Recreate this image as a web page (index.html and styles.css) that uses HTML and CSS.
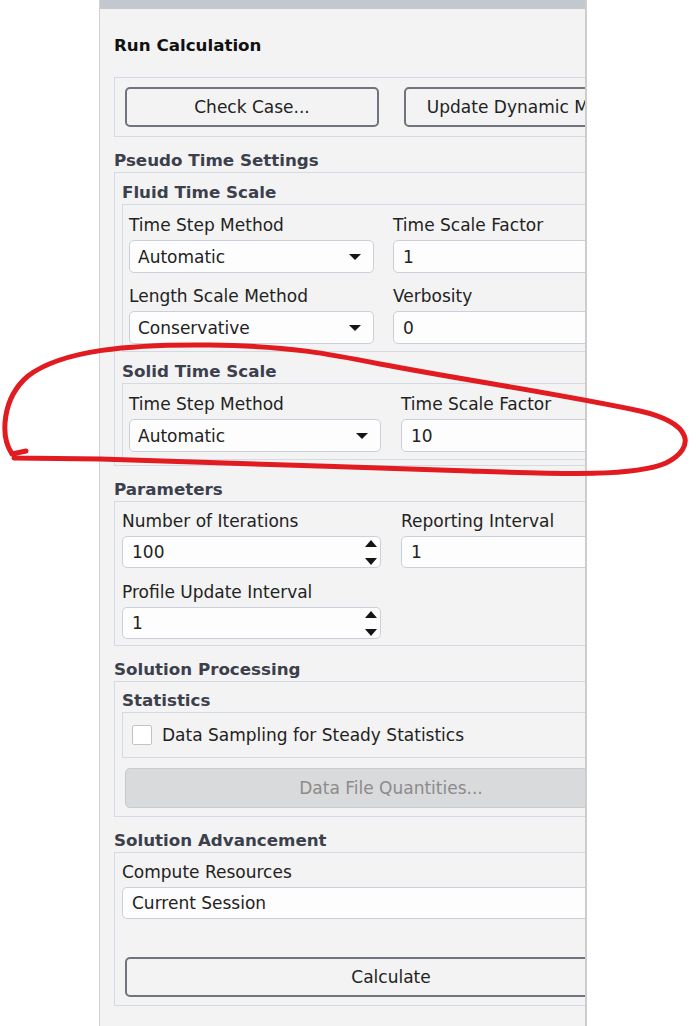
FILE: index.html
```html
<!DOCTYPE html>
<html>
<head>
<meta charset="utf-8">
<title>Run Calculation</title>
<link rel="stylesheet" href="styles.css">
</head>
<body>
<div class="panel">
  <div class="topbar"></div>
  <div class="content">
    <div class="title">Run Calculation</div>
    <div class="box box-buttons">
      <button class="btn">Check Case...</button>
      <button class="btn">Update Dynamic Mesh...</button>
    </div>

    <div class="sec">Pseudo Time Settings</div>
    <div class="box group">
      <div class="sub">Fluid Time Scale</div>
      <div class="box inner grid grid-fluid">
        <div class="field">
          <div class="label">Time Step Method</div>
          <div class="select"><span>Automatic</span><span class="caret"></span></div>
        </div>
        <div class="field">
          <div class="label">Time Scale Factor</div>
          <div class="input">1</div>
        </div>
        <div class="field">
          <div class="label">Length Scale Method</div>
          <div class="select"><span>Conservative</span><span class="caret"></span></div>
        </div>
        <div class="field">
          <div class="label">Verbosity</div>
          <div class="input">0</div>
        </div>
      </div>
      <div class="sub sub-gap">Solid Time Scale</div>
      <div class="box inner grid grid-solid">
        <div class="field">
          <div class="label">Time Step Method</div>
          <div class="select"><span>Automatic</span><span class="caret"></span></div>
        </div>
        <div class="field">
          <div class="label">Time Scale Factor</div>
          <div class="input">10</div>
        </div>
      </div>
    </div>

    <div class="sec">Parameters</div>
    <div class="box group-params grid grid-params">
      <div class="field">
        <div class="label">Number of Iterations</div>
        <div class="spin"><span>100</span><span class="arrows"><span class="up"></span><span class="down"></span></span></div>
      </div>
      <div class="field">
        <div class="label">Reporting Interval</div>
        <div class="input input-32">1</div>
      </div>
      <div class="field">
        <div class="label">Profile Update Interval</div>
        <div class="spin"><span>1</span><span class="arrows"><span class="up"></span><span class="down"></span></span></div>
      </div>
    </div>

    <div class="sec">Solution Processing</div>
    <div class="box group-proc">
      <div class="sub">Statistics</div>
      <div class="box check-box">
        <span class="checkbox"></span>
        <span>Data Sampling for Steady Statistics</span>
      </div>
      <button class="btn-disabled">Data File Quantities...</button>
    </div>

    <div class="sec">Solution Advancement</div>
    <div class="box group-adv">
      <div class="label">Compute Resources</div>
      <div class="input input-32 wide">Current Session</div>
      <button class="btn btn-wide">Calculate</button>
    </div>
  </div>
</div>

<svg class="annotation" width="696" height="1026" viewBox="0 0 696 1026">
  <path d="M 26,451 L 12,454 C 0,436 2,398 28,376 C 62,350 130,344 210,345 C 290,346 330,354 380,364 C 470,381 560,394 640,411 C 692,423 697,447 666,463 C 634,477 560,474 470,471 C 350,467 200,462 100,459 L 14,458" />
</svg>
</body>
</html>
```
FILE: styles.css
```css
* { box-sizing: border-box; }

body {
  margin: 0;
  width: 696px;
  height: 1026px;
  overflow: hidden;
  position: relative;
  background: #ffffff;
  font-family: "DejaVu Sans", Verdana, sans-serif;
  font-size: 17px;
  color: #222;
}

.panel {
  margin-left: 99px;
  width: 488px;
  height: 1026px;
  border-left: 1px solid #d2d2d2;
  border-right: 2px solid #cdcdcd;
  background: #f3f3f3;
  overflow: hidden;
}

.topbar {
  height: 9px;
  background: #c3c7ce;
}

.content {
  width: 568px;
  padding-left: 14px;
}

.title {
  margin: 25px 0 21px;
  font-size: 16.7px;
  font-weight: bold;
  line-height: 22px;
  color: #111;
}

.sec {
  margin: 12px 0 1px;
  font-size: 16.7px;
  font-weight: bold;
  line-height: 22px;
  color: #3b404c;
}

.sub {
  margin: 0 0 1px;
  font-size: 16.7px;
  font-weight: bold;
  line-height: 22px;
  color: #3b404c;
}

.sub-gap { margin-top: 8px; }

.box {
  border: 1px solid #d4dae5;
}

.box-buttons {
  display: flex;
  gap: 25px;
  padding: 9px 10px;
}

.btn {
  flex: none;
  width: 254px;
  height: 40px;
  border: 2px solid #6f747e;
  border-radius: 5px;
  background: #f3f3f3;
  font: inherit;
  color: #222;
  padding: 0;
  white-space: nowrap;
}

.group {
  padding: 8px 7px 5px;
}

.inner {
  padding: 9px 6px 7px;
}

.grid {
  display: grid;
  row-gap: 12px;
}

.grid-fluid { grid-template-columns: 245px 1fr; column-gap: 19px; }
.grid-solid { grid-template-columns: 252px 1fr; column-gap: 20px; }
.grid-params {
  grid-template-columns: 259px 1fr;
  column-gap: 20px;
  row-gap: 13px;
  padding: 8px 7px 6px;
}

.label {
  line-height: 22px;
  white-space: nowrap;
}

.select, .input, .spin {
  margin-top: 4px;
  height: 33px;
  border: 1px solid #c9cfdb;
  border-radius: 5px;
  background: #fdfdfd;
  display: flex;
  align-items: center;
  padding: 0 12px 0 8px;
  white-space: nowrap;
}

.select { justify-content: space-between; }

.caret {
  width: 0;
  height: 0;
  border-left: 6px solid transparent;
  border-right: 6px solid transparent;
  border-top: 6px solid #151515;
}

.input { padding-left: 9px; }
.input-32 { height: 32px; }

.spin {
  height: 32px;
  padding: 0 3px 0 9px;
  justify-content: space-between;
}

.arrows {
  display: flex;
  flex-direction: column;
  justify-content: space-between;
  height: 25px;
}

.up, .down {
  width: 0;
  height: 0;
  border-left: 6.5px solid transparent;
  border-right: 6.5px solid transparent;
}

.up { border-bottom: 7px solid #151515; }
.down { border-top: 7px solid #151515; }

.group-proc {
  padding: 7px 7px 8px;
}

.check-box {
  display: flex;
  align-items: center;
  gap: 10px;
  padding: 11px 9px;
  line-height: 22px;
}

.checkbox {
  flex: none;
  width: 20px;
  height: 20px;
  background: #fff;
  border: 1px solid #c3c3c3;
  border-radius: 2px;
}

.btn-disabled {
  display: block;
  width: calc(100% - 6px);
  height: 40px;
  margin: 10px 3px 0;
  border: 1px solid #c8cacd;
  border-radius: 5px;
  background: #d9dadc;
  font: inherit;
  color: #8b8b8b;
  padding: 0;
}

.group-adv {
  padding: 8px 7px 8px;
}

.btn-wide {
  display: block;
  width: calc(100% - 6px);
  margin: 38px 3px 0;
}

.annotation {
  position: absolute;
  left: 0;
  top: 0;
  pointer-events: none;
}

.annotation path {
  fill: none;
  stroke: #e11b1f;
  stroke-width: 5;
  stroke-linecap: round;
  stroke-linejoin: round;
}
```
